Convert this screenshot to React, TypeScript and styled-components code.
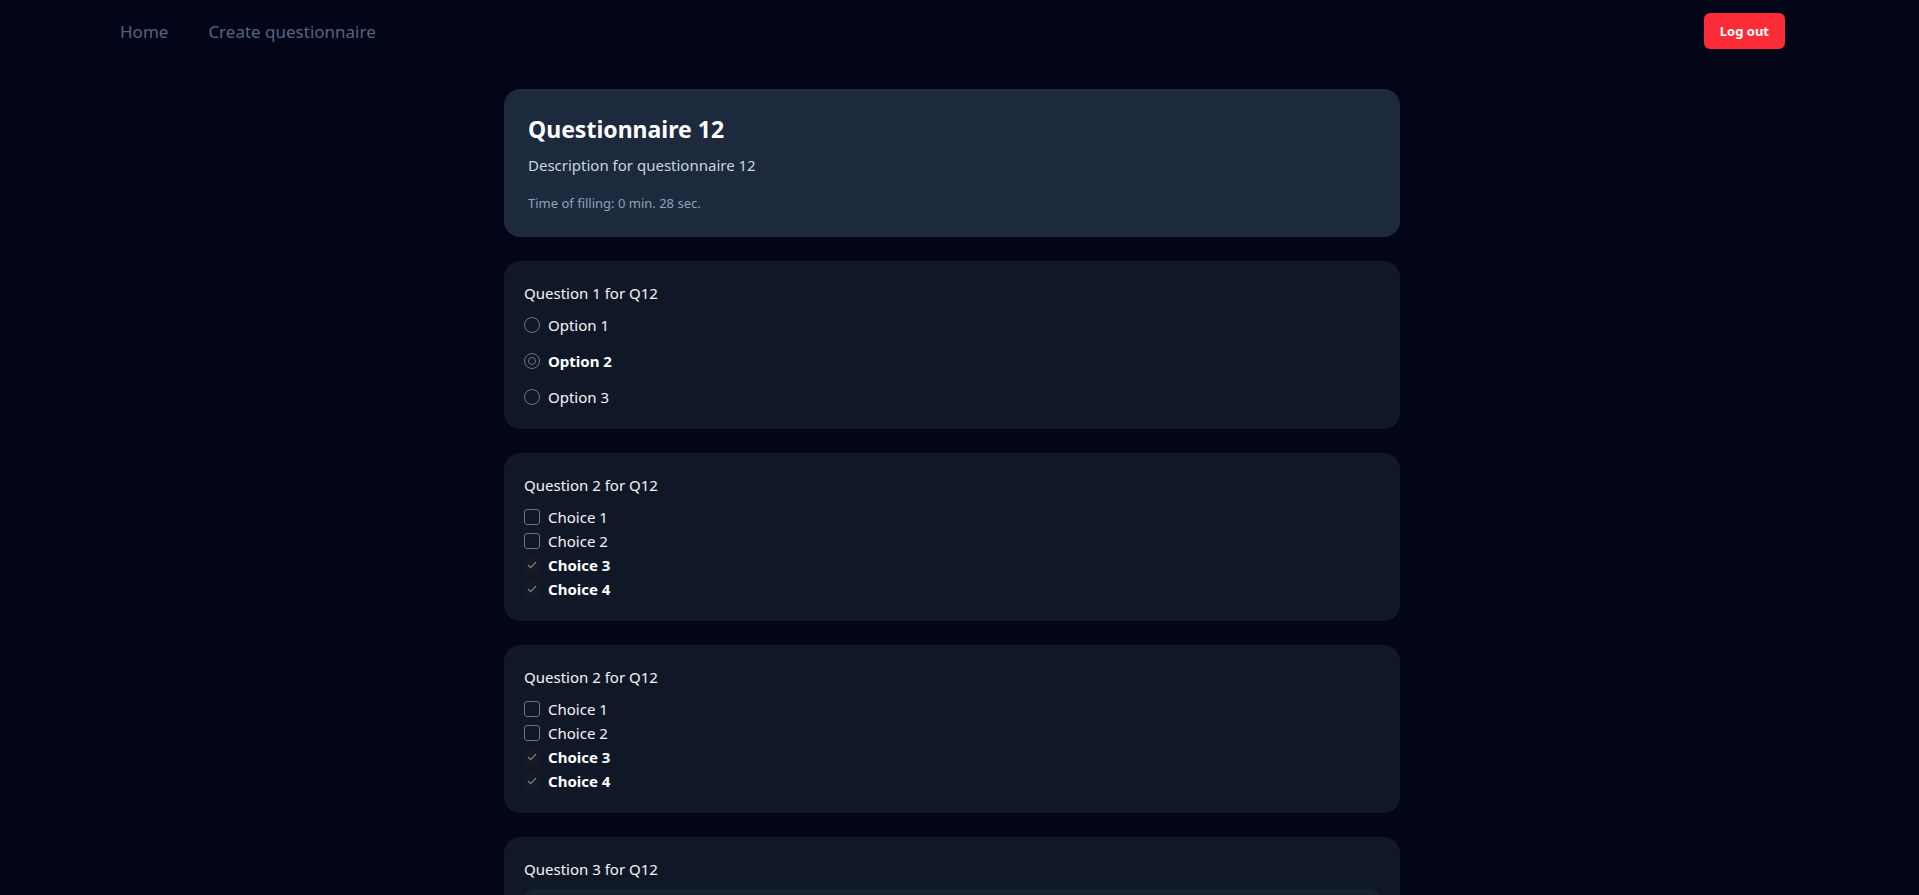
import React from "react";
import styled, { createGlobalStyle } from "styled-components";

const GlobalStyle = createGlobalStyle`
  html, body { margin: 0; padding: 0; }
  body {
    background: #020618;
    font-family: "Noto Sans", "Open Sans", sans-serif;
    color: #f3f4f6;
  }
  * { box-sizing: border-box; }
`;

const Page = styled.div`
  padding-right: 15px;
`;

const Nav = styled.nav`
  display: flex;
  align-items: center;
  justify-content: space-between;
  height: 62px;
  padding: 0 119px 0 120px;
`;

const NavLinks = styled.div`
  display: flex;
  align-items: center;
  gap: 40px;
`;

const NavLink = styled.a`
  font-size: 17px;
  color: #55657f;
  text-decoration: none;
  cursor: pointer;
`;

const LogoutButton = styled.button`
  height: 36px;
  padding: 0 16px;
  border: none;
  border-radius: 6px;
  background: #fb2c36;
  color: #ffffff;
  font-family: inherit;
  font-size: 13px;
  font-weight: 700;
  cursor: pointer;
`;

const Main = styled.main`
  display: flex;
  flex-direction: column;
  align-items: center;
  gap: 24px;
  padding: 27px 0 32px;
`;

const HeaderCard = styled.section`
  width: 896px;
  background: #1d293d;
  border-radius: 16px;
  padding: 24px;
`;

const Title = styled.h1`
  margin: 0;
  font-size: 23px;
  line-height: 32px;
  font-weight: 700;
  color: #ffffff;
`;

const Description = styled.p`
  margin: 8px 0 0;
  font-size: 15px;
  line-height: 24px;
  color: #cad5e2;
`;

const Meta = styled.p`
  margin: 16px 0 0;
  font-size: 13px;
  line-height: 20px;
  color: #90a1b9;
`;

const QuestionCard = styled.section`
  width: 896px;
  background: #101828;
  border-radius: 16px;
  padding: 20px;
`;

const QuestionTitle = styled.h2`
  margin: 0 0 8px;
  font-size: 15px;
  line-height: 24px;
  font-weight: 400;
  color: #f3f4f6;
`;

const OptionList = styled.div<{ $gap: number }>`
  display: flex;
  flex-direction: column;
  gap: ${(p) => p.$gap}px;
`;

const OptionRow = styled.label<{ $selected?: boolean }>`
  display: flex;
  align-items: center;
  gap: 8px;
  height: 24px;
  font-size: 15px;
  font-weight: ${(p) => (p.$selected ? 700 : 400)};
  color: ${(p) => (p.$selected ? "#ffffff" : "#f3f4f6")};
`;

const RadioMark = styled.span<{ $checked?: boolean }>`
  position: relative;
  width: 16px;
  height: 16px;
  border-radius: 50%;
  border: 1px solid #6b7280;
  flex-shrink: 0;
  &::after {
    content: "";
    display: ${(p) => (p.$checked ? "block" : "none")};
    position: absolute;
    left: 3px;
    top: 3px;
    width: 8px;
    height: 8px;
    border-radius: 50%;
    border: 1px solid #6b7280;
    box-sizing: border-box;
  }
`;

const CheckMark = styled.span<{ $checked?: boolean }>`
  display: flex;
  align-items: center;
  justify-content: center;
  width: 16px;
  height: 16px;
  border-radius: 3px;
  flex-shrink: 0;
  border: ${(p) => (p.$checked ? "none" : "1px solid #6b7280")};
  background: ${(p) => (p.$checked ? "#171a21" : "transparent")};
`;

const AnswerBox = styled.div`
  height: 80px;
  border-radius: 10px;
  background: #162033;
`;

const Radio = ({ label, checked }: { label: string; checked?: boolean }) => (
  <OptionRow $selected={checked}>
    <RadioMark $checked={checked} />
    {label}
  </OptionRow>
);

const Check = ({ label, checked }: { label: string; checked?: boolean }) => (
  <OptionRow $selected={checked}>
    <CheckMark $checked={checked}>
      {checked && (
        <svg width="10" height="8" viewBox="0 0 10 8" fill="none">
          <path d="M1 4.2 L3.6 6.6 L9 1.2" stroke="#9298a2" strokeWidth="1.1" />
        </svg>
      )}
    </CheckMark>
    {label}
  </OptionRow>
);

const CheckboxQuestion = ({ title }: { title: string }) => (
  <QuestionCard>
    <QuestionTitle>{title}</QuestionTitle>
    <OptionList $gap={0}>
      <Check label="Choice 1" />
      <Check label="Choice 2" />
      <Check label="Choice 3" checked />
      <Check label="Choice 4" checked />
    </OptionList>
  </QuestionCard>
);

export default function App() {
  return (
    <Page>
      <GlobalStyle />
      <Nav>
        <NavLinks>
          <NavLink>Home</NavLink>
          <NavLink>Create questionnaire</NavLink>
        </NavLinks>
        <LogoutButton>Log out</LogoutButton>
      </Nav>
      <Main>
        <HeaderCard>
          <Title>Questionnaire 12</Title>
          <Description>Description for questionnaire 12</Description>
          <Meta>Time of filling: 0 min. 28 sec.</Meta>
        </HeaderCard>
        <QuestionCard>
          <QuestionTitle>Question 1 for Q12</QuestionTitle>
          <OptionList $gap={12}>
            <Radio label="Option 1" />
            <Radio label="Option 2" checked />
            <Radio label="Option 3" />
          </OptionList>
        </QuestionCard>
        <CheckboxQuestion title="Question 2 for Q12" />
        <CheckboxQuestion title="Question 2 for Q12" />
        <QuestionCard>
          <QuestionTitle>Question 3 for Q12</QuestionTitle>
          <AnswerBox />
        </QuestionCard>
      </Main>
    </Page>
  );
}
